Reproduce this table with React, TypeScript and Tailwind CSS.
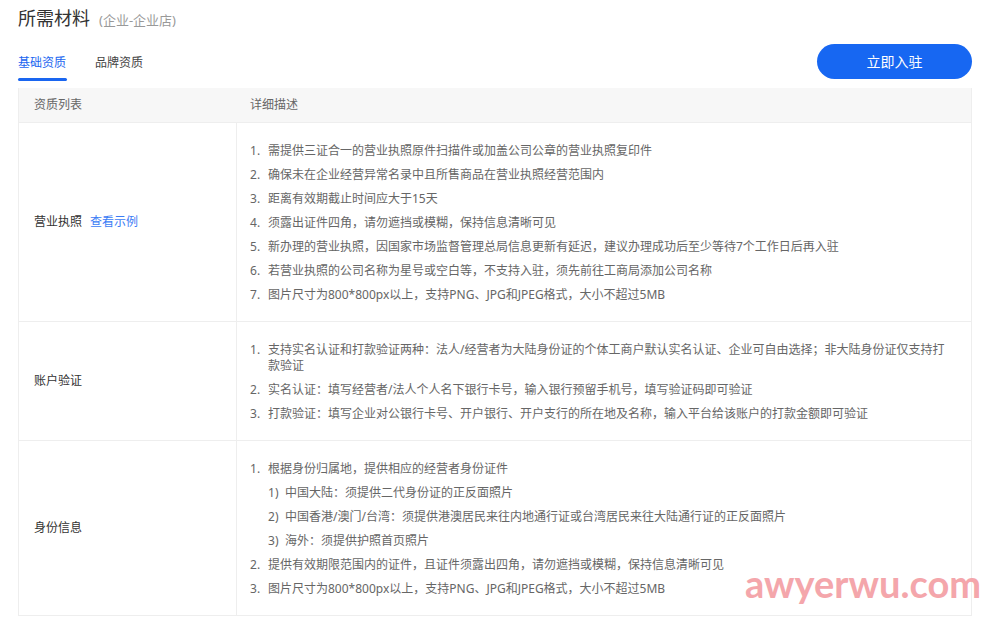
import React from 'react';

type Item = { text: React.ReactNode; subs?: string[] };

interface Row {
  label: string;
  link?: string;
  items: Item[];
}

const rows: Row[] = [
  {
    label: '营业执照',
    link: '查看示例',
    items: [
      { text: '需提供三证合一的营业执照原件扫描件或加盖公司公章的营业执照复印件' },
      { text: '确保未在企业经营异常名录中且所售商品在营业执照经营范围内' },
      { text: '距离有效期截止时间应大于15天' },
      { text: '须露出证件四角，请勿遮挡或模糊，保持信息清晰可见' },
      { text: '新办理的营业执照，因国家市场监督管理总局信息更新有延迟，建议办理成功后至少等待7个工作日后再入驻' },
      { text: '若营业执照的公司名称为星号或空白等，不支持入驻，须先前往工商局添加公司名称' },
      { text: '图片尺寸为800*800px以上，支持PNG、JPG和JPEG格式，大小不超过5MB' },
    ],
  },
  {
    label: '账户验证',
    items: [
      {
        text: (
          <>
            支持实名认证和打款验证两种：法人/经营者为大陆身份证的个体工商户默认实名认证、企业可自由选择；非大陆身份证仅支持打
            <br />
            款验证
          </>
        ),
      },
      { text: '实名认证：填写经营者/法人个人名下银行卡号，输入银行预留手机号，填写验证码即可验证' },
      { text: '打款验证：填写企业对公银行卡号、开户银行、开户支行的所在地及名称，输入平台给该账户的打款金额即可验证' },
    ],
  },
  {
    label: '身份信息',
    items: [
      {
        text: '根据身份归属地，提供相应的经营者身份证件',
        subs: [
          '中国大陆：须提供二代身份证的正反面照片',
          '中国香港/澳门/台湾：须提供港澳居民来往内地通行证或台湾居民来往大陆通行证的正反面照片',
          '海外：须提供护照首页照片',
        ],
      },
      { text: '提供有效期限范围内的证件，且证件须露出四角，请勿遮挡或模糊，保持信息清晰可见' },
      { text: '图片尺寸为800*800px以上，支持PNG、JPG和JPEG格式，大小不超过5MB' },
    ],
  },
];

function Description({ items }: { items: Item[] }) {
  return (
    <div className="flex flex-col gap-2 text-[12px] leading-[16px] text-[#666]">
      {items.map((item, i) => (
        <React.Fragment key={i}>
          <div className="flex">
            <span className="w-[18px] shrink-0">{i + 1}.</span>
            <span className="flex-1 whitespace-nowrap">{item.text}</span>
          </div>
          {item.subs?.map((s, j) => (
            <div key={j} className="flex pl-[18px]">
              <span className="w-[17px] shrink-0">{j + 1})</span>
              <span className="flex-1 whitespace-nowrap">{s}</span>
            </div>
          ))}
        </React.Fragment>
      ))}
    </div>
  );
}

export default function App() {
  return (
    <div className="relative w-[1000px] h-[621px] overflow-hidden bg-white font-['Noto_Sans','Noto_Sans_CJK_SC',sans-serif]">
      <div className="pl-[18px] pr-[28px]">
        {/* title */}
        <div className="h-[44px] pt-[5px] flex items-baseline">
          <span className="text-[18px] leading-[26px] text-[#333]">所需材料</span>
          <span className="ml-[9px] text-[13px] text-[#999]">(企业-企业店)</span>
        </div>

        {/* tabs + action */}
        <div className="h-[44px] flex justify-between items-start">
          <div className="flex gap-[28px] pt-[11px] text-[12px] leading-[16px]">
            <div className="flex flex-col">
              <span className="text-[#1a66f0]">基础资质</span>
              <span className="mt-[7px] h-[3px] w-[49px] rounded-full bg-[#1a66f0]" />
            </div>
            <span className="text-[#444]">品牌资质</span>
          </div>
          <button className="w-[155px] h-[35px] rounded-full bg-[#1767f2] text-white text-[14px]">
            立即入驻
          </button>
        </div>

        {/* table */}
        <div className="border-x border-b border-[#eee]">
          <div className="h-[34px] flex items-center bg-[#f7f7f7] text-[12px] text-[#666]">
            <div className="w-[218px] pl-[15px]">资质列表</div>
            <div className="pl-[13px]">详细描述</div>
          </div>
          {rows.map((row) => (
            <div key={row.label} className="flex border-t border-[#eee]">
              <div className="w-[218px] shrink-0 flex items-center pl-[15px] border-r border-[#eee] text-[12px] text-[#333]">
                <span>{row.label}</span>
                {row.link && <span className="ml-[8px] text-[#3b7cf5]">{row.link}</span>}
              </div>
              <div className="flex-1 pt-[20px] pb-[18px] pl-[13px] pr-[12px]">
                <Description items={row.items} />
              </div>
            </div>
          ))}
        </div>
      </div>

      {/* watermark */}
      <div className="absolute left-[745px] top-[564px] text-[38px] leading-[38px] font-bold text-[#f4a6ab] font-['Lato',sans-serif]">
        awyerwu.com
      </div>
    </div>
  );
}
